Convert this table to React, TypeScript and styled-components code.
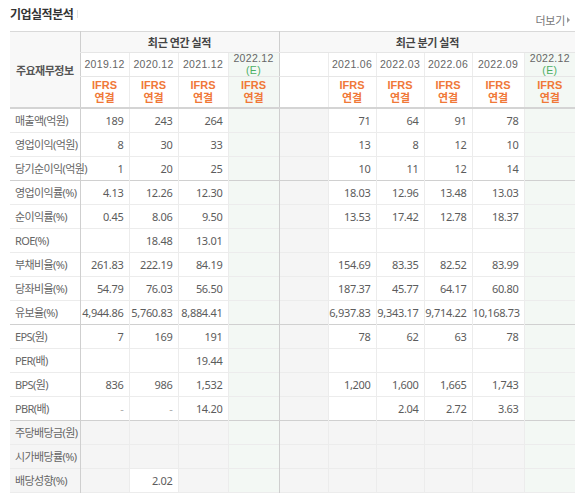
import React from 'react';
import styled, { createGlobalStyle, css } from 'styled-components';

const Global = createGlobalStyle`
  html, body { margin: 0; padding: 0; background: #fff; }
  body { font-family: "Noto Sans", "Noto Sans CJK KR", sans-serif; }
`;

const Wrap = styled.div`
  width: 565px;
  padding: 0 5px 0 10px;
`;

const TitleBar = styled.div`
  display: flex;
  align-items: flex-end;
  justify-content: space-between;
  height: 31px;
`;

const Title = styled.h2`
  margin: 0 0 9px 0;
  font-size: 12px;
  font-weight: 700;
  color: #333;
  letter-spacing: -0.5px;
  display: flex;
  align-items: center;
  gap: 4px;
  font-family: "Noto Sans CJK KR", sans-serif;
  &::after {
    content: '';
    width: 1px;
    height: 8px;
    background: #e4e4e4;
  }
`;

const More = styled.a`
  margin: 0 5px 3px 0;
  font-size: 11px;
  color: #777;
  font-family: "Noto Sans CJK KR", sans-serif;
  display: flex;
  align-items: center;
  gap: 2px;
  letter-spacing: -0.3px;
  &::after {
    content: '';
    border-left: 3px solid #999;
    border-top: 3px solid transparent;
    border-bottom: 3px solid transparent;
  }
`;

const Table = styled.table`
  width: 565px;
  table-layout: fixed;
  border-collapse: collapse;
  border-top: 1px solid #d9d9d9;
  border-bottom: 1px solid #cfcfcf;
  font-family: "Noto Sans", "Noto Sans CJK KR", sans-serif;
`;

const GroupTh = styled.th`
  height: 20px;
  padding: 0;
  font-size: 11px;
  font-weight: 700;
  color: #444;
  background: #f8f8f8;
  border-bottom: 1px solid #e6e6e6;
  border-left: 1px solid #cfcfcf;
  font-family: "Noto Sans CJK KR", sans-serif;
  letter-spacing: -0.3px;
`;

const LabelTh = styled.th`
  padding: 0;
  font-size: 11px;
  font-weight: 700;
  color: #555;
  background: #f8f8f8;
  border-bottom: 2px solid #d4d4d4;
  font-family: "Noto Sans CJK KR", sans-serif;
  letter-spacing: -0.5px;
`;

const YearTh = styled.th<{ $est?: boolean; $group?: boolean }>`
  height: 23px;
  padding: 0;
  font-family: "Liberation Sans", sans-serif;
  font-size: 10.5px;
  font-weight: 400;
  color: #666;
  line-height: 11.5px;
  letter-spacing: 0.3px;
  border-bottom: 1px solid #e6e6e6;
  border-left: 1px solid ${p => (p.$group ? '#cfcfcf' : '#ececec')};
  background: ${p => (p.$est ? '#f3f8f4' : '#fff')};
`;

const Est = styled.span`
  display: block;
  color: #4caf63;
`;

const IfrsTh = styled.th<{ $est?: boolean; $group?: boolean }>`
  height: 30px;
  padding: 0;
  font-size: 11px;
  font-weight: 700;
  color: #f07838;
  line-height: 13px;
  border-bottom: 2px solid #d4d4d4;
  border-left: 1px solid ${p => (p.$group ? '#cfcfcf' : '#ececec')};
  background: ${p => (p.$est ? '#f3f8f4' : '#fff')};
  font-family: "Liberation Sans", "Noto Sans CJK KR", sans-serif;
`;

const Row = styled.tr<{ $sep?: boolean }>`
  height: 24px;
  border-bottom: 1px solid ${p => (p.$sep ? '#d0d0d0' : '#ececec')};
`;

const Label = styled.th<{ $gray?: boolean }>`
  padding: 0 0 0 5px;
  text-align: left;
  font-size: 11px;
  font-weight: 400;
  color: #666;
  white-space: nowrap;
  letter-spacing: -0.6px;
  font-family: "Noto Sans", "Noto Sans CJK KR", sans-serif;
  background: ${p => (p.$gray ? '#f5f5f5' : '#fff')};
`;

type Tone = 'white' | 'gray' | 'est';

const Cell = styled.td<{ $tone: Tone; $group?: boolean; $dash?: boolean }>`
  padding: 0 5px 0 0;
  text-align: right;
  font-size: 11px;
  color: ${p => (p.$dash ? '#aaa' : '#5c5c5c')};
  white-space: nowrap;
  letter-spacing: -0.3px;
  border-left: 1px solid ${p => (p.$group ? '#cfcfcf' : '#ececec')};
  ${p =>
    p.$tone === 'gray'
      ? css`background: #f5f5f5;`
      : p.$tone === 'est'
      ? css`background: #f3f8f4;`
      : css`background: #fff;`}
`;

type RowData = {
  label: string;
  annual: string[];
  quarter: string[];
  sep?: boolean;
  grayRow?: boolean;
  whiteCells?: number[];
};

const rows: RowData[] = [
  { label: '매출액(억원)', annual: ['189', '243', '264'], quarter: ['71', '64', '91', '78'] },
  { label: '영업이익(억원)', annual: ['8', '30', '33'], quarter: ['13', '8', '12', '10'] },
  { label: '당기순이익(억원)', annual: ['1', '20', '25'], quarter: ['10', '11', '12', '14'], sep: true },
  { label: '영업이익률(%)', annual: ['4.13', '12.26', '12.30'], quarter: ['18.03', '12.96', '13.48', '13.03'] },
  { label: '순이익률(%)', annual: ['0.45', '8.06', '9.50'], quarter: ['13.53', '17.42', '12.78', '18.37'] },
  { label: 'ROE(%)', annual: ['', '18.48', '13.01'], quarter: ['', '', '', ''] },
  { label: '부채비율(%)', annual: ['261.83', '222.19', '84.19'], quarter: ['154.69', '83.35', '82.52', '83.99'] },
  { label: '당좌비율(%)', annual: ['54.79', '76.03', '56.50'], quarter: ['187.37', '45.77', '64.17', '60.80'] },
  { label: '유보율(%)', annual: ['4,944.86', '5,760.83', '8,884.41'], quarter: ['6,937.83', '9,343.17', '9,714.22', '10,168.73'], sep: true },
  { label: 'EPS(원)', annual: ['7', '169', '191'], quarter: ['78', '62', '63', '78'] },
  { label: 'PER(배)', annual: ['', '', '19.44'], quarter: ['', '', '', ''] },
  { label: 'BPS(원)', annual: ['836', '986', '1,532'], quarter: ['1,200', '1,600', '1,665', '1,743'] },
  { label: 'PBR(배)', annual: ['-', '-', '14.20'], quarter: ['', '2.04', '2.72', '3.63'], sep: true },
  { label: '주당배당금(원)', annual: ['', '', ''], quarter: ['', '', '', ''], grayRow: true },
  { label: '시가배당률(%)', annual: ['', '', ''], quarter: ['', '', '', ''], grayRow: true },
  { label: '배당성향(%)', annual: ['', '2.02', ''], quarter: ['', '', '', ''], grayRow: true, whiteCells: [1] },
];

const widths = [70, 49, 49, 50, 51, 49, 48, 48, 48, 52, 51];
const annualYears = ['2019.12', '2020.12', '2021.12'];
const quarterYears = ['2021.06', '2022.03', '2022.06', '2022.09'];

export default function App() {
  return (
    <>
      <Global />
      <Wrap>
        <TitleBar>
          <Title>기업실적분석</Title>
          <More>더보기</More>
        </TitleBar>
        <Table>
          <colgroup>
            {widths.map((w, i) => (
              <col key={i} style={{ width: w }} />
            ))}
          </colgroup>
          <thead>
            <tr>
              <LabelTh rowSpan={3}>주요재무정보</LabelTh>
              <GroupTh colSpan={4}>최근 연간 실적</GroupTh>
              <GroupTh colSpan={6}>최근 분기 실적</GroupTh>
            </tr>
            <tr>
              {annualYears.map((y, i) => (
                <YearTh key={y} $group={i === 0}>{y}</YearTh>
              ))}
              <YearTh $est>
                2022.12<Est>(E)</Est>
              </YearTh>
              <YearTh $group />
              {quarterYears.map(y => (
                <YearTh key={y}>{y}</YearTh>
              ))}
              <YearTh $est>
                2022.12<Est>(E)</Est>
              </YearTh>
            </tr>
            <tr>
              {[0, 1, 2, 3].map(i => (
                <IfrsTh key={'a' + i} $group={i === 0} $est={i === 3}>
                  IFRS<br />연결
                </IfrsTh>
              ))}
              <IfrsTh $group />
              {[0, 1, 2, 3, 4].map(i => (
                <IfrsTh key={'q' + i} $est={i === 4}>
                  IFRS<br />연결
                </IfrsTh>
              ))}
            </tr>
          </thead>
          <tbody>
            {rows.map(r => {
              const tone = (idx: number): Tone =>
                r.grayRow && !(r.whiteCells || []).includes(idx) ? 'gray' : 'white';
              return (
                <Row key={r.label} $sep={r.sep}>
                  <Label $gray={r.grayRow}>{r.label}</Label>
                  {r.annual.map((v, i) => (
                    <Cell key={'a' + i} $tone={tone(i)} $group={i === 0} $dash={v === '-'}>
                      {v}
                    </Cell>
                  ))}
                  <Cell $tone="est" />
                  <Cell $tone="gray" $group />
                  {r.quarter.map((v, i) => (
                    <Cell key={'q' + i} $tone={tone(10 + i)} $dash={v === '-'}>
                      {v}
                    </Cell>
                  ))}
                  <Cell $tone="est" />
                </Row>
              );
            })}
          </tbody>
        </Table>
      </Wrap>
    </>
  );
}
